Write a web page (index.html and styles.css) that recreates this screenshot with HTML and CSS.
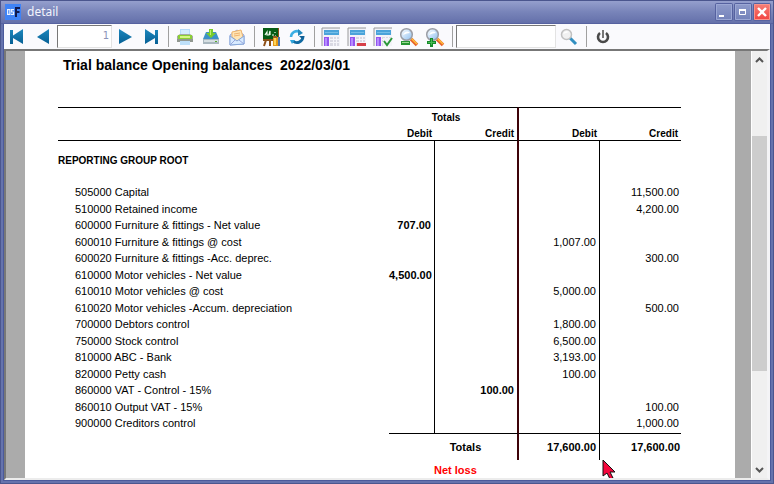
FILE: index.html
```html
<!DOCTYPE html>
<html lang="en">
<head>
<meta charset="utf-8">
<meta name="viewport" content="width=device-width, initial-scale=1">
<title>detail</title>
<link rel="stylesheet" href="styles.css">
</head>
<body>
<div class="window">
  <header class="titlebar">
    <svg class="app-icon" width="16" height="16" viewBox="0 0 16 16" aria-hidden="true">
      <rect width="16" height="16" fill="#3f83f6"/>
      <g fill="none" stroke="#eaf2ff" stroke-width="1.2">
        <rect x="2.6" y="5.6" width="2.3" height="4.8"/>
        <path d="M9 5.6H6.6V8H8.6V10.4H6"/>
      </g>
      <path d="M10 3h5v2h-3v2h2.500v2H12v4h-2z" fill="#10194f"/>
    </svg>
    <h1 class="window-title">detail</h1>
    <div class="window-buttons">
      <button class="win-btn" type="button" aria-label="Minimize"><svg width="16" height="16" viewBox="0 0 16 16"><path d="M3 11h5v2H3z" fill="#fff"/></svg></button>
      <button class="win-btn" type="button" aria-label="Maximize"><svg width="16" height="16" viewBox="0 0 16 16"><path d="M4.500 5.500h6v5h-6z" fill="none" stroke="#fff"/><path d="M4 5h7v2H4z" fill="#fff"/></svg></button>
      <button class="win-btn win-close" type="button" aria-label="Close"><svg width="16" height="16" viewBox="0 0 16 16"><path d="M4 4l8 8M12 4l-8 8" stroke="#fff" stroke-width="2.400"/></svg></button>
    </div>
  </header>

  <nav class="toolbar" aria-label="Report tools">
    <svg class="defs" width="0" height="0" aria-hidden="true">
      <defs>
        <linearGradient id="blue" x1="0" y1="0" x2="0" y2="1"><stop offset="0" stop-color="#1d87bd"/><stop offset="1" stop-color="#066095"/></linearGradient>
        <linearGradient id="lens" x1="0" y1="0" x2="1" y2="1"><stop offset="0" stop-color="#fff"/><stop offset="1" stop-color="#8dbff0"/></linearGradient>
        <g id="sheet">
          <path d="M1 1h18v18H1z" fill="#f3f3f8"/>
          <path d="M1 19V1h18" fill="none" stroke="#9a9a9a"/>
          <path d="M3 3h15v5H3z" fill="#4aa3da"/><path d="M4 5h13v1H4z" fill="#75bee7"/>
          <path d="M3 10h5v9H3z" fill="#9355f0"/><path d="M4 11h2v8H4z" fill="#b58cff"/>
          <path d="M9 10h9v9H9z" fill="#d9d9e3"/>
          <path d="M9 12.500h9M9 15.500h9M12.500 10v9M15.500 10v9" stroke="#f5f5fa"/>
        </g>
        <g id="magnifier">
          <path d="M12 12l6 6" stroke="#e8622a" stroke-width="3.500"/>
          <path d="M12.500 11.500l5.500 5.500" stroke="#ffc03c" stroke-width="1.500"/>
          <circle cx="7.500" cy="7.500" r="5.800" fill="url(#lens)" stroke="#9a9da5" stroke-width="1.500"/>
          <path d="M4 8a4 4 0 0 1 7-2q-3 0-7 2z" fill="#fff"/>
        </g>
      </defs>
    </svg>
    <button class="tool" type="button" aria-label="First page"><svg width="16" height="16" viewBox="0 0 16 16"><path d="M1 1h3v5.500L14 0v15L4 9v6H1z" fill="url(#blue)"/></svg></button>
    <button class="tool" type="button" aria-label="Previous page"><svg width="16" height="16" viewBox="0 0 16 16"><path d="M14 0v15L2 8z" fill="url(#blue)"/></svg></button>
    <input class="field page-number" type="text" value="1" aria-label="Page number">
    <button class="tool" type="button" aria-label="Next page"><svg width="16" height="16" viewBox="0 0 16 16"><path d="M2 0l13 8-13 7z" fill="url(#blue)"/></svg></button>
    <button class="tool" type="button" aria-label="Last page"><svg width="16" height="16" viewBox="0 0 16 16"><path d="M15 1h-3v5.500L2 0v15l10-6v6h3z" fill="url(#blue)"/></svg></button>
    <span class="separator"></span>
    <button class="tool" type="button" aria-label="Print"><svg width="18" height="18" viewBox="0 0 18 18"><path d="M4 1h10v7H4z" fill="#b6dbfa"/><path d="M5 2h8v4H5z" fill="#d3ebff"/><path d="M1 8l3-2h10l3 2v5H1z" fill="#a5a9a5"/><path d="M2 7h14v4H2z" fill="#8bcf35"/><path d="M4 8h10v2H4z" fill="#d7f688"/><path d="M1 11h16v3H1z" fill="#919891"/><path d="M4 13h10v4H4z" fill="#bee0fa"/></svg></button>
    <button class="tool" type="button" aria-label="Save"><svg width="18" height="18" viewBox="0 0 18 18"><path d="M4 4h10l3 7v5H1v-5z" fill="#3d91c9"/><path d="M1 11h16v5H1z" fill="#a9b7c0"/><path d="M2 12h14v2H2z" fill="#d6dfe3"/><path d="M13 13h2v1h-2z" fill="#57a92e"/><path d="M7 1h4v4h3l-5 5-5-5h3z" fill="#7acb2b"/><path d="M8 2h1v5H8z" fill="#c2ef6f"/></svg></button>
    <button class="tool" type="button" aria-label="Email"><svg width="18" height="18" viewBox="0 0 18 18"><path d="M2 7l7-5 7 5v9L2 17z" fill="#cfdcf8" stroke="#92a7dc"/><path d="M4 4l9-2 2 7-6 4-5-4z" fill="#ffe6b7" stroke="#efb36b"/><path d="M6 6l6-1M6 8l6-1" stroke="#f0b36f"/><path d="M2 8l7 5 7-5v8L2 17z" fill="#d8eaff" stroke="#86a8db"/><path d="M2 17l5-5M16 16l-5-4" stroke="#97a6dc"/></svg></button>
    <span class="separator"></span>
    <button class="tool" type="button" aria-label="Training"><svg width="20" height="20" viewBox="0 0 20 20"><path d="M5 13L3 19M9 13v6" stroke="#8d4e16" stroke-width="2"/><path d="M2 1h16v13H2z" fill="#8a5119"/><path d="M2 1h15v11H2z" fill="#075c16"/><path d="M4 8l2-3v3h2l1-4v4M11 8h2M14 5v1M14 9h1" fill="none" stroke="#f3fff1" stroke-width="1.200"/><path d="M12 10h6v9h-6z" fill="#e59a1b"/><path d="M13 11h2v7h-2z" fill="#ffd457"/><path d="M17 10h2v9h-2z" fill="#4b76b2"/><path d="M12 9h4v2h-4z" fill="#9a5b24"/></svg></button>
    <button class="tool" type="button" aria-label="Refresh"><svg width="18" height="18" viewBox="0 0 18 18"><path d="M3 9a6 6 0 0 1 9-5" fill="none" stroke="#3caee3" stroke-width="2.500"/><path d="M15 9a6 6 0 0 1-10 4" fill="none" stroke="#116aa2" stroke-width="2.800"/><path d="M10 1l5 4-5 3z" fill="#2388bd"/><path d="M11 8h6l-3 3z" fill="#116096"/><path d="M2 12h5l-3 4z" fill="#2da3db"/></svg></button>
    <span class="separator"></span>
    <button class="tool" type="button" aria-label="Show columns"><svg width="20" height="20" viewBox="0 0 20 20"><use href="#sheet"/></svg></button>
    <button class="tool" type="button" aria-label="Remove columns"><svg width="20" height="20" viewBox="0 0 20 20"><use href="#sheet"/><path d="M10 16h9v3h-9z" fill="#d63f49"/></svg></button>
    <button class="tool" type="button" aria-label="Apply columns"><svg width="20" height="20" viewBox="0 0 20 20"><use href="#sheet"/><path d="M10 11h9v8h-9z" fill="#f3f3f8"/><path d="M11 14l3 4 5-7" fill="none" stroke="#2c983b" stroke-width="2"/></svg></button>
    <button class="tool" type="button" aria-label="Zoom out"><svg width="20" height="20" viewBox="0 0 20 20"><use href="#magnifier"/><path d="M2 14h9v4H2z" fill="#279533"/><path d="M3 15h7v1H3z" fill="#98db91"/></svg></button>
    <button class="tool" type="button" aria-label="Zoom in"><svg width="20" height="20" viewBox="0 0 20 20"><use href="#magnifier"/><path d="M5 11h3v3h3v3H8v3H5v-3H2v-3h3z" fill="#168b2b"/><path d="M6 12h1v6H6zM3 15h7v1H3z" fill="#48b953"/></svg></button>
    <span class="separator"></span>
    <input class="field search-text" type="text" aria-label="Search text">
    <button class="tool" type="button" aria-label="Search"><svg width="18" height="18" viewBox="0 0 18 18"><path d="M10 10l6 6" stroke="#328fc1" stroke-width="3"/><circle cx="6.500" cy="6.500" r="5" fill="#f1f1f1" stroke="#c1c1c1" stroke-width="1.500"/><path d="M3 6a4 4 0 0 1 6-2z" fill="#fff"/></svg></button>
    <span class="separator"></span>
    <button class="tool" type="button" aria-label="Close report"><svg width="16" height="16" viewBox="0 0 16 16"><path d="M5 4a5 5 0 1 0 6 0" fill="none" stroke="#4a4a4a" stroke-width="2.600"/><path d="M8 1v8" stroke="#777" stroke-width="2"/></svg></button>
  </nav>

  <main class="viewer">
    <div class="paper">
      <h2 class="report-title">Trial balance Opening balances&nbsp; 2022/03/01</h2>
      <table class="report">
        <colgroup><col><col class="c-debit-total"><col class="c-credit-total"><col class="c-amount"><col class="c-amount"></colgroup>
        <thead>
          <tr><th></th><th class="totals-head" colspan="2">Totals</th><th colspan="2"></th></tr>
          <tr><th></th><th>Debit</th><th>Credit</th><th>Debit</th><th>Credit</th></tr>
        </thead>
        <tbody class="group">
          <tr><th scope="rowgroup">REPORTING GROUP ROOT</th><td></td><td></td><td></td><td></td></tr>
        </tbody>
        <tbody class="accounts">
          <tr><td>505000 Capital</td><td></td><td></td><td></td><td>11,500.00</td></tr>
          <tr><td>510000 Retained income</td><td></td><td></td><td></td><td>4,200.00</td></tr>
          <tr><td>600000 Furniture &amp; fittings - Net value</td><td>707.00</td><td></td><td></td><td></td></tr>
          <tr><td>600010 Furniture &amp; fittings @ cost</td><td></td><td></td><td>1,007.00</td><td></td></tr>
          <tr><td>600020 Furniture &amp; fittings -Acc. deprec.</td><td></td><td></td><td></td><td>300.00</td></tr>
          <tr><td>610000 Motor vehicles - Net value</td><td>4,500.00</td><td></td><td></td><td></td></tr>
          <tr><td>610010 Motor vehicles @ cost</td><td></td><td></td><td>5,000.00</td><td></td></tr>
          <tr><td>610020 Motor vehicles -Accum. depreciation</td><td></td><td></td><td></td><td>500.00</td></tr>
          <tr><td>700000 Debtors control</td><td></td><td></td><td>1,800.00</td><td></td></tr>
          <tr><td>750000 Stock control</td><td></td><td></td><td>6,500.00</td><td></td></tr>
          <tr><td>810000 ABC - Bank</td><td></td><td></td><td>3,193.00</td><td></td></tr>
          <tr><td>820000 Petty cash</td><td></td><td></td><td>100.00</td><td></td></tr>
          <tr><td>860000 VAT - Control - 15%</td><td></td><td>100.00</td><td></td><td></td></tr>
          <tr><td>860010 Output VAT - 15%</td><td></td><td></td><td></td><td>100.00</td></tr>
          <tr><td>900000 Creditors control</td><td></td><td></td><td></td><td>1,000.00</td></tr>
        </tbody>
        <tfoot>
          <tr class="totals"><td></td><th class="totals-label" colspan="2">Totals</th><td>17,600.00</td><td>17,600.00</td></tr>
          <tr class="result"><td></td><th colspan="4">Net loss</th></tr>
        </tfoot>
      </table>
    </div>
    <div class="scrollbar">
      <button class="scroll-btn" type="button" aria-label="Scroll up"><svg width="9" height="8" viewBox="0 0 9 8"><path d="M1 6l3.500-3.500L8 6" fill="none" stroke="#555" stroke-width="2"/></svg></button>
      <div class="track"><div class="thumb"></div></div>
      <button class="scroll-btn" type="button" aria-label="Scroll down"><svg width="9" height="8" viewBox="0 0 9 8"><path d="M1 2l3.500 3.500L8 2" fill="none" stroke="#555" stroke-width="2"/></svg></button>
    </div>
    <svg class="pointer" width="14" height="20" viewBox="0 0 14 20" aria-hidden="true"><path d="M1 1v16l4-3 3 6 3-1-3-6h5z" fill="#f5063c" stroke="#111"/></svg>
  </main>
</div>
</body>
</html>
```
FILE: styles.css
```css
* { box-sizing: border-box; }

body {
  margin: 0;
  font-family: "Liberation Sans", Arial, sans-serif;
}

.window {
  display: flex;
  flex-direction: column;
  height: 100vh;
  padding: 0 4px 4px;
  background: #6573ad;
  box-shadow: inset 0 0 0 1px #4b568e, inset 0 0 0 3px #6573ad, inset 0 0 0 4px #4b5a9b;
}

.titlebar {
  display: flex;
  flex: none;
  align-items: center;
  height: 24px;
  margin: 0 -3px;
  padding: 0 3px 0 4px;
  border-top: 1px solid #4b568e;
  border-bottom: 1px solid #5662a0;
  background: linear-gradient(#959fcd, #7884b9 50%, #6470aa);
}

.app-icon { flex: none; }

.window-title {
  flex: 1;
  margin: 0 0 0 6px;
  color: #f2f4fc;
  font: 12px/20px "Noto Sans", sans-serif;
}

.window-buttons {
  display: flex;
  gap: 3px;
}

.win-btn {
  display: flex;
  width: 16px;
  height: 16px;
  padding: 0;
  border: 0;
  border-radius: 1px;
  background: linear-gradient(#8e9aca, #7482ba);
  box-shadow: inset 0 0 0 1px #9ba7d4, 0 0 0 1px #5662a0;
}

.win-close {
  background: linear-gradient(#f58078, #f24440);
  box-shadow: inset 0 0 0 1px #f9938a, 0 0 0 1px #5662a0;
}

.toolbar {
  display: flex;
  flex: none;
  align-items: center;
  height: 25px;
  background: #fafafd;
}

.defs { position: absolute; }

.tool {
  display: flex;
  flex: none;
  align-items: center;
  justify-content: center;
  width: 26px;
  height: 24px;
  padding: 0;
  border: 0;
  background: none;
}

.separator {
  flex: none;
  width: 8px;
  height: 21px;
  background: linear-gradient(#a0a0a0, #a0a0a0) center / 1px 100% no-repeat;
}

.field {
  height: 23px;
  padding: 0 2px;
  border: 1px solid #e3e3e3;
  border-top-color: #777;
  border-left-color: #777;
  background: #fff;
  color: #8b93b8;
  font: 10px/18px "DejaVu Sans", sans-serif;
}

.page-number {
  width: 55px;
  margin-left: 1px;
  padding-bottom: 2px;
  text-align: right;
}

.search-text { width: 100px; }

.viewer {
  position: relative;
  display: flex;
  flex: 1;
  min-height: 0;
  overflow: hidden;
  padding-left: 19px;
  border: solid #777;
  border-width: 2px 3px 2px 2px;
  border-right-color: #f4f4f6;
  border-bottom-color: #ececec;
  background: #ababab;
}

.paper {
  flex: 1;
  overflow: hidden;
  padding: 5px 54px 0 33px;
  background: #fff;
}

.report-title {
  margin: 0 0 33px 5px;
  font-size: 14px;
  line-height: 18px;
}

.report {
  width: 100%;
  border-collapse: separate;
  border-spacing: 0;
  table-layout: fixed;
  font-size: 10px;
  line-height: 12px;
}

.c-debit-total { width: 46px; }
.c-credit-total { width: 84px; }
.c-amount { width: 81px; }

.report th,
.report td {
  padding: 0 3px 0 0;
  font-weight: normal;
  text-align: right;
  white-space: nowrap;
}

.report thead th {
  height: 16px;
  padding-top: 2px;
  font-weight: bold;
}

.report thead tr:first-child th {
  height: 18px;
  border-top: 1px solid #000;
}

.report thead tr:last-child th { border-bottom: 1px solid #000; }

.report thead .totals-head {
  padding-right: 14px;
  border-right: 2px solid #3d0309;
  text-align: center;
}

.report td:nth-child(2),
.report tbody td:nth-child(4) { border-right: 1px solid #000; }

.report thead tr:last-child th:nth-child(3),
.report tbody td:nth-child(3) { border-right: 2px solid #3d0309; }

.report .group th,
.report .accounts td:first-child { text-align: left; }

.report .group th {
  height: 43px;
  padding-bottom: 4px;
  font-weight: bold;
}

.report .accounts td {
  height: 16px;
  font-size: 11px;
}

.report .accounts tr:nth-child(even) td { height: 17px; }
.report .accounts td:first-child { padding-left: 17px; }

.report .accounts td:nth-child(2),
.report .accounts td:nth-child(3) { font-weight: bold; }

.report .accounts td:last-child { padding-right: 2px; }

.report .accounts tr:last-child td {
  height: 18px;
  padding-bottom: 2px;
}

.report .totals > * {
  height: 27px;
  font-size: 11px;
  font-weight: bold;
}

.report .totals > :nth-child(n+2) { border-top: 1px solid #000; }

.report .totals .totals-label {
  padding-left: 28px;
  border-right: 2px solid #3d0309;
  text-align: center;
}

.report .totals td:nth-child(3) { border-right: 1px solid #000; }

.report .totals td:last-child { padding-right: 1px; }

.report .result th {
  height: 20px;
  padding-left: 45px;
  color: #f00;
  font-size: 11px;
  font-weight: bold;
  text-align: left;
}

.scrollbar {
  display: flex;
  flex-direction: column;
  flex: none;
  width: 16px;
  margin-left: 16px;
  border-left: 1px solid #fff;
  background: #f0f0f0;
}

.scroll-btn {
  display: flex;
  flex: none;
  align-items: center;
  justify-content: center;
  height: 17px;
  padding: 0;
  border: 0;
  background: none;
}

.track {
  flex: 1;
  display: grid;
  grid-template-rows: 68fr 235fr 90fr;
}

.thumb {
  grid-row: 2;
  background: #cdcdcd;
}

.pointer {
  position: absolute;
  left: 596px;
  top: 408px;
}
```
